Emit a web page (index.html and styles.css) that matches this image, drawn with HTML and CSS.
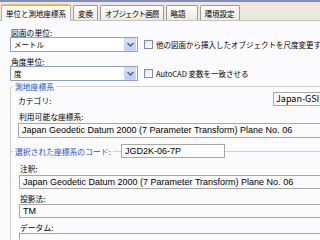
FILE: index.html
```html
<!DOCTYPE html>
<html lang="ja">
<head>
<meta charset="utf-8">
<link rel="stylesheet" href="styles.css">
</head>
<body>
<div class="tabs">
  <div class="tab active">単位と測地座標系</div>
  <div class="tab">変換</div>
  <div class="tab narrow">オブジェクト画層</div>
  <div class="tab wide">略語</div>
  <div class="tab">環境設定</div>
</div>
<div class="page">
  <div class="label">図面の単位:</div>
  <div class="row">
    <div class="select"><span class="val">メートル</span><span class="arrow"><svg width="7" height="5" viewBox="0 0 7 5"><path d="M0.5 1 L3.5 4 L6.5 1" fill="none" stroke="#4d6185" stroke-width="1.5"/></svg></span></div>
    <div class="check"><span class="cbox"></span><span>他の図面から挿入したオブジェクトを尺度変更する</span></div>
  </div>
  <div class="label">角度単位:</div>
  <div class="row">
    <div class="select"><span class="val">度</span><span class="arrow"><svg width="7" height="5" viewBox="0 0 7 5"><path d="M0.5 1 L3.5 4 L6.5 1" fill="none" stroke="#4d6185" stroke-width="1.5"/></svg></span></div>
    <div class="check"><span class="cbox"></span><span>AutoCAD 変数を一致させる</span></div>
  </div>
  <div class="group">
    <div class="legend">測地座標系</div>
    <div class="cat-row"><span>カテゴリ:</span><div class="field cat">Japan-GSI</div></div>
    <div class="label gap6">利用可能な座標系:</div>
    <div class="field tall gap2">Japan Geodetic Datum 2000 (7 Parameter Transform) Plane No. 06</div>
  </div>
  <div class="group2">
    <div class="code-row"><div class="code-cell"><span class="legend2">選択された座標系のコード:</span></div><div class="field code">JGD2K-06-7P</div></div>
    <div class="label gap6">注釈:</div>
    <div class="field gap2">Japan Geodetic Datum 2000 (7 Parameter Transform) Plane No. 06</div>
    <div class="label gap5">投影法:</div>
    <div class="field gap1">TM</div>
    <div class="label gap5">データム:</div>
    <div class="field gap1"></div>
  </div>
</div>
</body>
</html>
```

FILE: styles.css
```css
html, body {
  margin: 0;
  padding: 0;
  width: 320px;
  height: 240px;
  overflow: hidden;
  background: #fbfbfd;
  font-family: "Liberation Sans", "Noto Sans CJK JP", sans-serif;
  font-size: 8px;
  color: #000;
}
.tabs {
  display: flex;
  align-items: flex-end;
  height: 21px;
  box-sizing: border-box;
  padding-left: 1px;
  border-top: 2px solid #8190b0;
  border-bottom: 1px solid #c3c3bd;
  background: linear-gradient(#f3e4dc 0%, #efe8dc 50%, #e4ecd6 100%);
}
.tab {
  font-family: "Noto Sans CJK JP", sans-serif;
  font-size: 7.5px;
  height: 15px;
  line-height: 15px;
  padding: 0 4px;
  margin-right: 2px;
  border: 1px solid #9b9b91;
  border-bottom: none;
  border-radius: 2px 2px 0 0;
  background: linear-gradient(#fdfdfb, #ecebe3);
  box-sizing: border-box;
  white-space: nowrap;
}
.tab.narrow { letter-spacing: -0.8px; }
.tab.wide { padding: 0 11px 0 4px; }
.tab.active {
  height: 17px;
  margin-bottom: -1px;
  background: #fbfbfd;
  border-color: #b0b0a8;
  border-top: 2px solid #f0b848;
}
.page {
  width: 380px;
  padding: 7px 0 0 10px;
}
.label {
  font-family: "Noto Sans CJK JP", sans-serif;
  font-size: 7.8px;
  line-height: 9px;
  height: 9px;
  padding-left: 1px;
}
.gap6 { margin-top: 6px; }
.gap5 { margin-top: 5px; }
.gap2 { margin-top: 2px; }
.gap1 { margin-top: 1px; }
.row {
  display: flex;
  align-items: center;
  gap: 6px;
  margin: 0 0 5px;
}
.select {
  width: 128px;
  height: 15px;
  box-sizing: border-box;
  border: 1px solid #8da1c0;
  background: #fff;
  display: flex;
  align-items: center;
  justify-content: space-between;
  padding-right: 1px;
  font-family: "Noto Sans CJK JP", sans-serif;
  font-size: 7.5px;
}
.select .val { padding-left: 3px; }
.arrow {
  width: 12px;
  height: 13px;
  box-sizing: border-box;
  border: 1px solid #c6d5f5;
  border-radius: 1px;
  background: linear-gradient(#dbe6fd, #b9cdf8);
  display: flex;
  align-items: center;
  justify-content: center;
}
.check {
  display: flex;
  align-items: center;
  gap: 3px;
  font-family: "Noto Sans CJK JP", sans-serif;
  font-size: 7.5px;
  white-space: nowrap;
}
.cbox {
  width: 9px;
  height: 9px;
  box-sizing: border-box;
  border: 1px solid #7d8fac;
  background: linear-gradient(135deg, #e4e3dc, #fff);
}
.group {
  border: 1px solid #d3d3c5;
  border-bottom: none;
  border-radius: 3px 0 0 0;
  margin-top: 4px;
  padding: 0 0 13px 7px;
}
.legend, .legend2 {
  font-family: "Noto Sans CJK JP", sans-serif;
  font-size: 7.8px;
  color: #1e4fc8;
  background: #fbfbfd;
  line-height: 9px;
  height: 9px;
  width: max-content;
}
.legend {
  padding: 0 2px;
  margin: -5px 0 0 -5px;
}
.legend2 {
  display: block;
  padding: 0 2px;
  margin-left: 3px;
}
.cat-row {
  display: grid;
  grid-template-columns: 255px auto;
  align-items: center;
  margin-top: 1px;
  font-family: "Noto Sans CJK JP", sans-serif;
  font-size: 7.8px;
}
.cat-row span { padding-top: 3px; }
.field {
  height: 14px;
  box-sizing: border-box;
  border: 1px solid #a8a8a2;
  background: #fbfbfb;
  padding-left: 3px;
  line-height: 12px;
  font-size: 9px;
  white-space: nowrap;
  overflow: hidden;
}
.field.tall { height: 15px; line-height: 13px; }
.field.cat { width: 80px; padding-left: 2px; }
.group2 {
  border-top: 1px solid #d3d3c5;
  border-left: 1px solid #d3d3c5;
  padding-left: 8px;
}
.code-row {
  display: grid;
  grid-template-columns: 111px 104px;
  align-items: center;
  margin: -8px 0 0 -9px;
  height: 14px;
}
```
